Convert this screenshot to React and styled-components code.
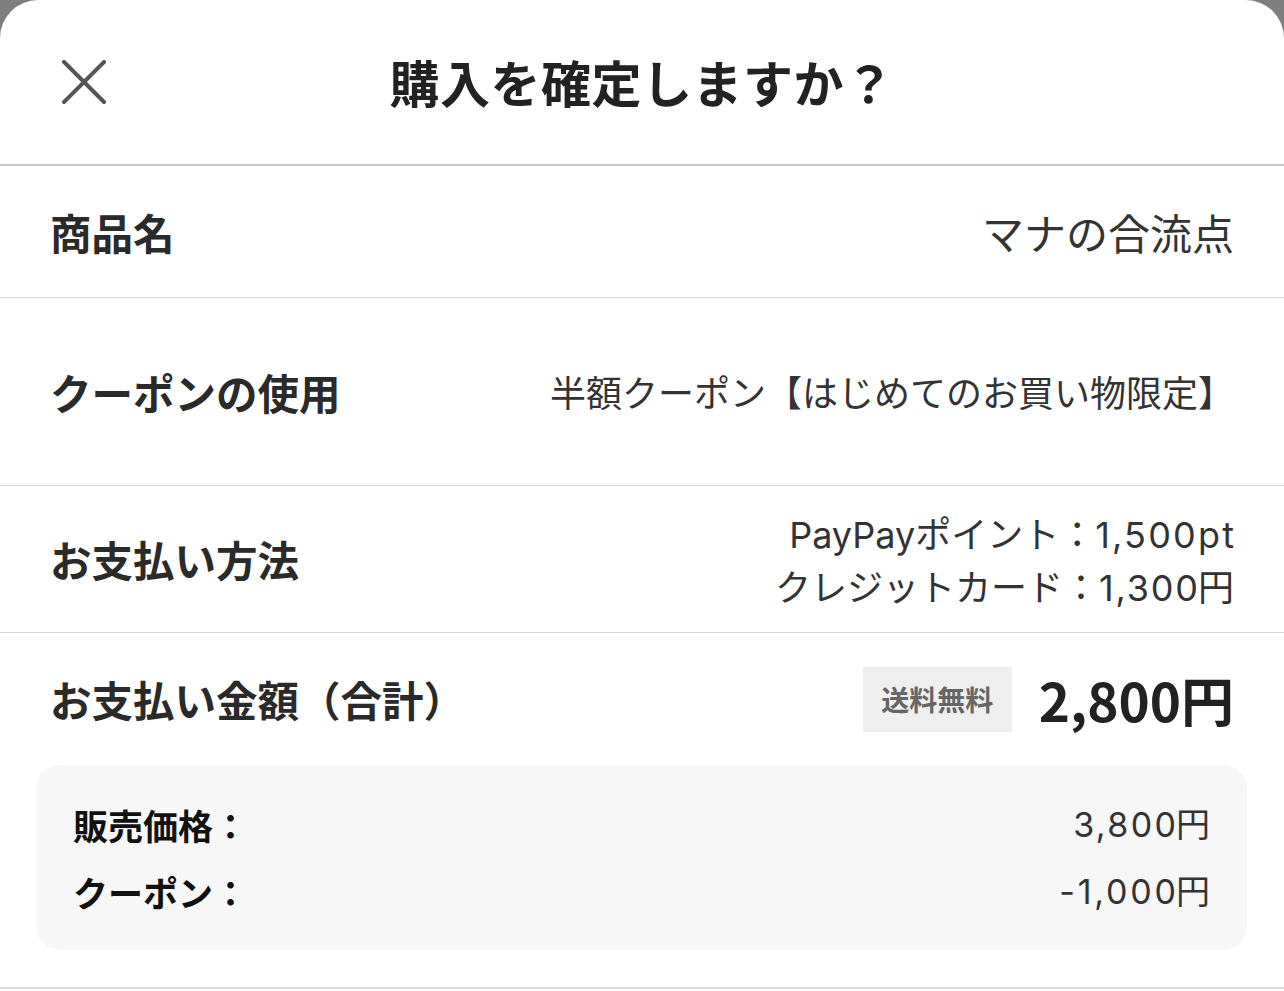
import React from "react";
import styled, { createGlobalStyle } from "styled-components";

const Global = createGlobalStyle`
  html, body { margin: 0; padding: 0; background: #7f7f7f; }
  body { font-family: "Noto Sans CJK JP", "Noto Sans", sans-serif; color: #333; }
  * { box-sizing: border-box; }
`;

const latinFirst = `"Inter", "Noto Sans CJK JP", sans-serif`;

const Sheet = styled.div`
  background: #fff;
  border-radius: 38px 38px 0 0;
  min-height: 991px;
  width: 1284px;
  overflow: hidden;
`;

const Header = styled.header`
  height: 166px;
  display: grid;
  grid-template-columns: 1fr auto 1fr;
  align-items: center;
  border-bottom: 2px solid #c8c8c8;
`;

const CloseButton = styled.button`
  justify-self: start;
  margin-left: 59px;
  width: 50px;
  height: 50px;
  padding: 0;
  border: none;
  background: none;
  display: flex;
  align-items: center;
  justify-content: center;
  cursor: pointer;
`;

const Title = styled.h1`
  margin: 0;
  margin-top: -2px;
  font-size: 50px;
  font-weight: 700;
  color: #222;
  letter-spacing: 0.5px;
  line-height: 1;
`;

const Row = styled.div`
  display: flex;
  justify-content: space-between;
  align-items: center;
  height: ${(p) => p.$h}px;
  padding: 0 50px;
  border-bottom: ${(p) => (p.$noBorder ? "none" : "1px solid #d6d6d6")};
`;

const Label = styled.div`
  font-size: 41.5px;
  font-weight: 700;
  color: #2a2a2a;
  white-space: nowrap;
`;

const Value = styled.div`
  font-family: ${latinFirst};
  font-size: ${(p) => p.$size || 36}px;
  color: #333;
  text-align: right;
  line-height: 53px;
  padding-top: 5px;
  white-space: nowrap;
`;

const Amount = styled.span`
  letter-spacing: ${(p) => p.$ls || 1.8}px;
  margin-right: -${(p) => p.$ls || 1.8}px;
`;

const TotalGroup = styled.div`
  display: flex;
  align-items: center;
  gap: 27px;
`;

const Badge = styled.span`
  display: inline-flex;
  align-items: center;
  justify-content: center;
  width: 149px;
  height: 65px;
  background: #efefef;
  color: #666;
  font-size: 28px;
  font-weight: 700;
`;

const Total = styled.span`
  font-size: 53px;
  font-weight: 700;
  color: #222;
  line-height: 1;
`;

const Breakdown = styled.div`
  margin: 0 37px 37px 36px;
  background: #f7f7f7;
  border-radius: 24px;
  padding: 26px 37px 25px 37px;
`;

const BreakdownRow = styled.div`
  display: flex;
  justify-content: space-between;
  align-items: center;
  line-height: 67px;
`;

const BreakdownLabel = styled.span`
  font-size: 35px;
  font-weight: 700;
  color: #111;
`;

const BreakdownValue = styled.span`
  font-family: ${latinFirst};
  font-size: 34px;
  color: #333;
`;

const BottomRule = styled.div`
  border-top: 2px solid #dcdcdc;
`;

const CloseIcon = () => (
  <svg width="44" height="44" viewBox="0 0 44 44" fill="none">
    <path d="M2 2L42 42M42 2L2 42" stroke="#555" strokeWidth="4" strokeLinecap="square" />
  </svg>
);

export default function App() {
  return (
    <>
      <Global />
      <Sheet>
        <Header>
          <CloseButton aria-label="閉じる">
            <CloseIcon />
          </CloseButton>
          <Title>購入を確定しますか？</Title>
          <div />
        </Header>

        <Row $h={132}>
          <Label>商品名</Label>
          <Value $size={42}>マナの合流点</Value>
        </Row>

        <Row $h={188}>
          <Label>クーポンの使用</Label>
          <Value>半額クーポン【はじめてのお買い物限定】</Value>
        </Row>

        <Row $h={147}>
          <Label>お支払い方法</Label>
          <Value>
            <div>
              PayPayポイント：<Amount $ls={2.2}>1,500pt</Amount>
            </div>
            <div>
              クレジットカード：<Amount $ls={1.8}>1,300</Amount>円
            </div>
          </Value>
        </Row>

        <Row $h={132} $noBorder>
          <Label>お支払い金額（合計）</Label>
          <TotalGroup>
            <Badge>送料無料</Badge>
            <Total>2,800円</Total>
          </TotalGroup>
        </Row>

        <Breakdown>
          <BreakdownRow>
            <BreakdownLabel>販売価格：</BreakdownLabel>
            <BreakdownValue>
              <Amount $ls={2.4}>3,800</Amount>円
            </BreakdownValue>
          </BreakdownRow>
          <BreakdownRow>
            <BreakdownLabel>クーポン：</BreakdownLabel>
            <BreakdownValue>
              <Amount $ls={2.8}>-1,000</Amount>円
            </BreakdownValue>
          </BreakdownRow>
        </Breakdown>

        <BottomRule />
      </Sheet>
    </>
  );
}
